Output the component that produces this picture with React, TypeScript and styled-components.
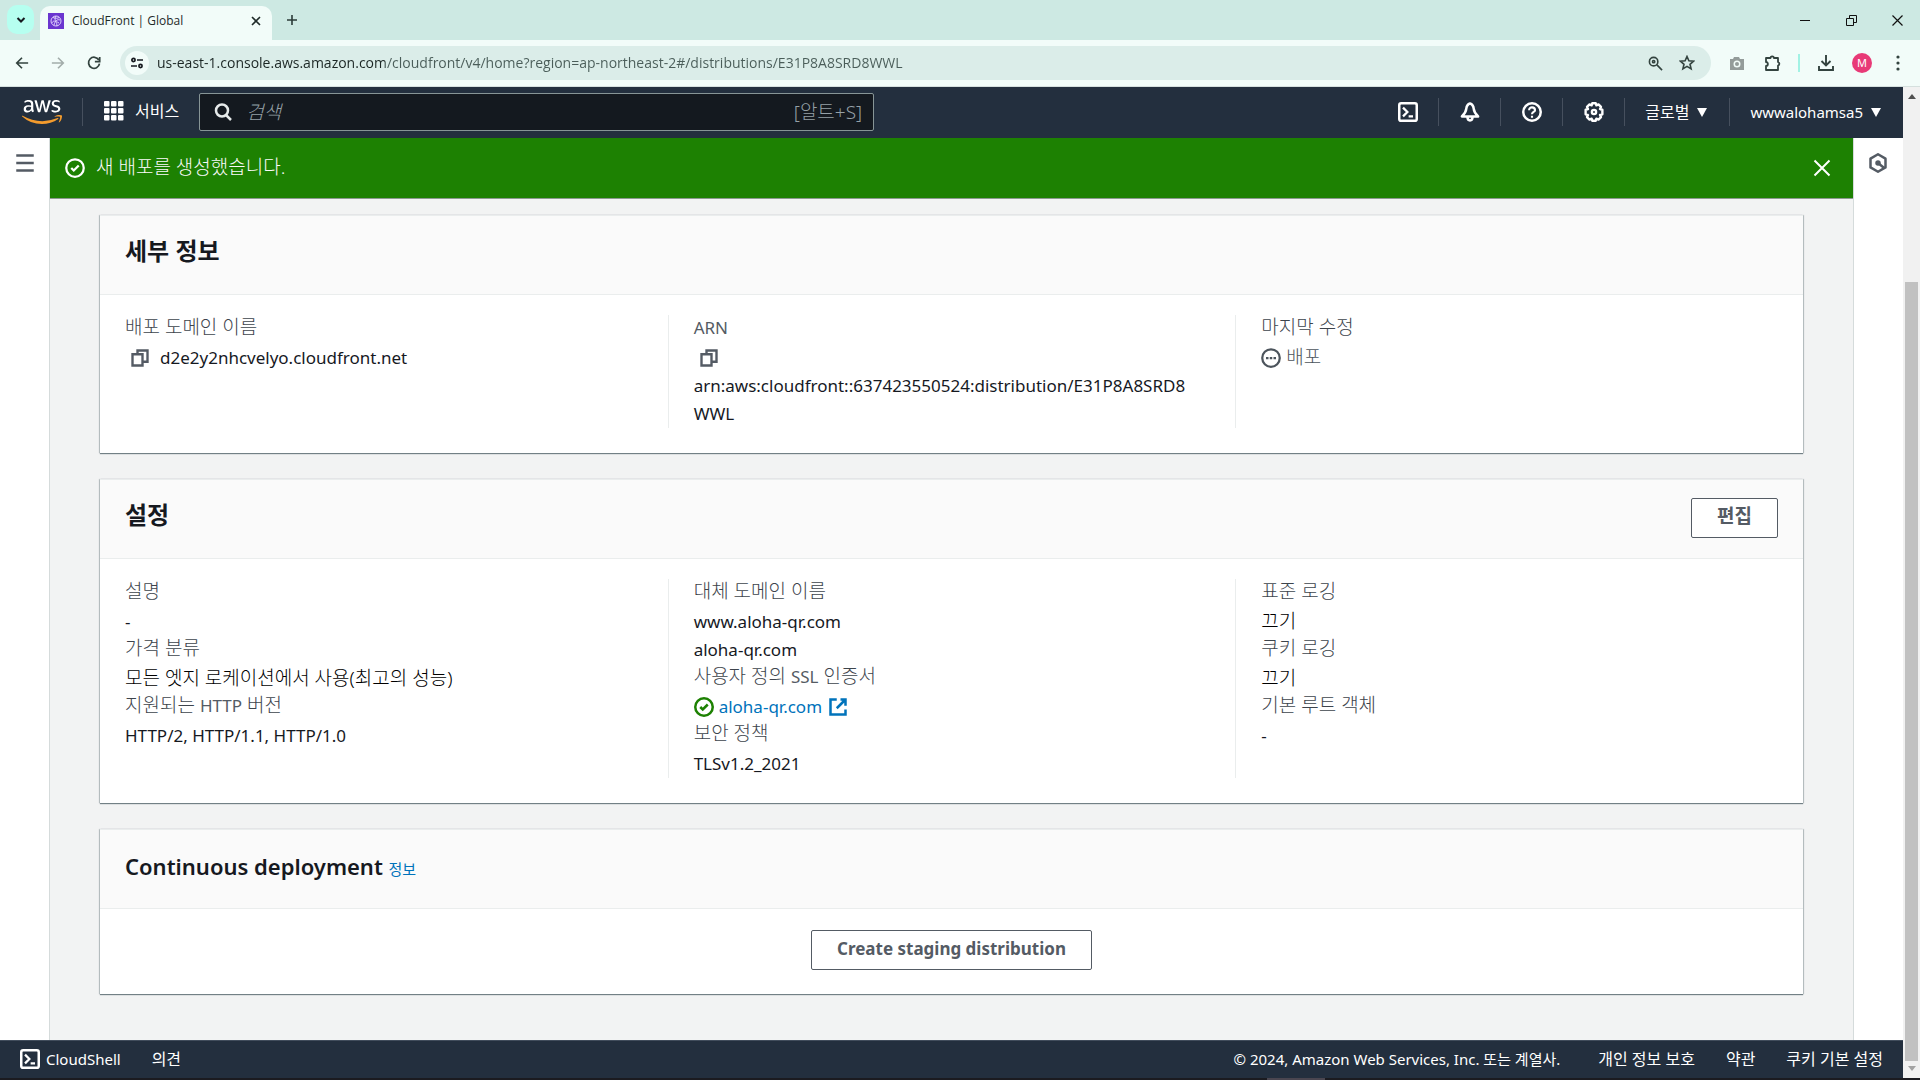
import React from "react";
import styled, { createGlobalStyle, css } from "styled-components";
import { FaAws } from "react-icons/fa";

const c = {
  ink: "#16191f",
  label: "#545b64",
  link: "#0073bb",
  green: "#1d8102",
  nav: "#232f3e",
  page: "#f2f3f3",
  rule: "#eaeded",
  chrome: "#cde9e3",
  toolbar: "#f2fcf9",
};

const sans = `"Noto Sans", "Noto Sans CJK KR", sans-serif`;
const chromeSans = `"Open Sans", "Noto Sans CJK KR", sans-serif`;

const GlobalStyle = createGlobalStyle`
  *, *::before, *::after { box-sizing: border-box; }
  body { margin: 0; font-family: ${sans}; font-size: 17px; line-height: 28px; color: ${c.ink}; overflow: hidden; }
  button, input { font: inherit; color: inherit; margin: 0; }
  button { background: none; border: 0; padding: 0; cursor: pointer; }
  h2, dl, dd, dt, p { margin: 0; }
  a { color: inherit; text-decoration: none; }
  svg { display: block; flex: none; }
`;

const Window = styled.div`
  height: 100vh;
  display: flex;
  flex-direction: column;
  background: #fff;
`;

/* ---------- browser frame ---------- */

const TabStrip = styled.div`
  height: 40px;
  flex: none;
  display: flex;
  align-items: flex-end;
  padding-left: 7px;
  background: ${c.chrome};
`;

const TabSearch = styled.button`
  width: 27px;
  height: 29px;
  margin: 0 6px 6px 0;
  border-radius: 10px;
  background: #b6fff0;
  display: grid;
  place-items: center;
`;

const Tab = styled.div`
  width: 232px;
  height: 34px;
  padding: 0 10px 4px 8px;
  border-radius: 10px 10px 0 0;
  background: ${c.toolbar};
  display: flex;
  align-items: center;
  gap: 8px;
  font-family: ${chromeSans};
  font-size: 12px;
  color: #1f2b29;
`;

const TabTitle = styled.span`
  flex: 1;
`;

const StripButton = styled.button`
  height: 40px;
  width: 40px;
  display: grid;
  place-items: center;
  color: #2b3b38;
`;

const WindowControls = styled.div`
  margin-left: auto;
  display: flex;
`;

const ControlButton = styled.button`
  width: 46px;
  height: 40px;
  display: grid;
  place-items: center;
  color: #111;
`;

const Toolbar = styled.div`
  height: 47px;
  flex: none;
  display: flex;
  align-items: center;
  padding: 0 4px;
  background: ${c.toolbar};
  border-bottom: 1px solid #d5e0de;
`;

const ToolButton = styled.button<{ $dim?: boolean; $w?: number }>`
  width: ${(p) => p.$w ?? 36}px;
  height: 34px;
  display: grid;
  place-items: center;
  color: ${(p) => (p.$dim ? "#a3adab" : "#33433f")};
`;

const AddressBar = styled.div`
  flex: 1;
  height: 34px;
  margin: 0 8px;
  padding: 0 8px 0 5px;
  border-radius: 17px;
  background: #dbede9;
  display: flex;
  align-items: center;
`;

const SiteInfo = styled.button`
  width: 24px;
  height: 24px;
  border-radius: 50%;
  background: ${c.toolbar};
  display: grid;
  place-items: center;
  margin-right: 8px;
`;

const AddressInput = styled.input`
  flex: 1;
  min-width: 0;
  border: 0;
  padding: 0;
  outline: none;
  font-family: ${chromeSans};
  font-size: 14px;
  color: transparent;
  background: linear-gradient(90deg, #1b2624 228px, #4a5d59 228px);
  background-clip: text;
  -webkit-background-clip: text;
`;

const ToolDivider = styled.span`
  width: 2px;
  height: 18px;
  margin: 0 8px 0 7px;
  background: #a2f2e4;
`;

const Avatar = styled.button`
  width: 20px;
  height: 20px;
  margin: 0 8px;
  border-radius: 50%;
  background: #e83a77;
  color: #fff;
  font-size: 11px;
  line-height: 20px;
`;

/* ---------- viewport ---------- */

const Viewport = styled.div`
  flex: 1;
  min-height: 0;
  display: flex;
`;

const Page = styled.div`
  flex: 1;
  min-width: 0;
  display: flex;
  flex-direction: column;
`;

const ScrollTrack = styled.div`
  width: 17px;
  display: flex;
  flex-direction: column;
  align-items: center;
  padding: 6px 0;
  background: #f1f1f1;
`;

const ScrollThumb = styled.div`
  width: 13px;
  flex: 1;
  margin: 183px 0 5px;
  background: #c1c1c1;
`;

const NavBar = styled.header`
  height: 51px;
  flex: none;
  display: flex;
  align-items: center;
  padding-bottom: 1px;
  background: ${c.nav};
  color: #fff;
  font-size: 15px;
`;

const NavDivider = styled.span`
  width: 1px;
  height: 28px;
  background: #46505e;
`;

const LogoLink = styled.a`
  padding: 0 20px 0 22px;
`;

const Services = styled.button`
  display: flex;
  align-items: center;
  gap: 11px;
  padding: 0 20px 2px 21px;
  font-size: 16px;
`;

const SearchBox = styled.label`
  width: 675px;
  height: 38px;
  padding: 0 11px 0 13px;
  display: flex;
  align-items: center;
  gap: 13px;
  border: 1px solid #879596;
  border-radius: 2px;
  background: #14191f;
  color: #95a0a6;
  font-size: 19px;
  font-weight: 300;
`;

const SearchInput = styled.input`
  flex: 1;
  min-width: 0;
  border: 0;
  padding: 0;
  outline: none;
  background: none;
  &::placeholder {
    color: #95a0a6;
    opacity: 1;
    font-style: italic;
  }
`;

const NavRight = styled.nav`
  margin-left: auto;
  display: flex;
  align-items: center;
`;

const NavIcon = styled.button`
  width: 61px;
  height: 40px;
  display: grid;
  place-items: center;
`;

const NavMenu = styled.button<{ $ko?: boolean }>`
  display: flex;
  align-items: center;
  gap: 8px;
  padding: 0 22px 0 20px;
  font-size: ${(p) => (p.$ko ? 16 : 15)}px;
`;

const Body = styled.div`
  flex: 1;
  min-height: 0;
  display: flex;
`;

const Rail = styled.aside<{ $side: "left" | "right" }>`
  width: 50px;
  flex: none;
  display: flex;
  justify-content: center;
  align-items: flex-start;
  padding-top: 15px;
  color: ${c.label};
  background: #fff;
  box-shadow: inset ${(p) => (p.$side === "left" ? "-1px" : "1px")} 0 #d5dbdb;
`;

const Main = styled.main`
  flex: 1;
  min-width: 0;
  background: ${c.page};
`;

const Flash = styled.div`
  height: 61px;
  display: flex;
  align-items: center;
  gap: 11px;
  padding: 0 21px 0 15px;
  background: ${c.green};
  color: #fff;
  border-bottom: 1px solid #8c9a90;
`;

const FlashText = styled.p`
  flex: 1;
  padding-bottom: 2px;
  color: #fafafa;
  font-size: 19px;
  font-weight: 300;
`;

const Cards = styled.div`
  padding: 16px 50px 0 50px;
  display: grid;
  gap: 26px;
`;

const Card = styled.section`
  background: #fff;
  border-top: 1px solid ${c.rule};
  box-shadow: 0 1px 1px 0 rgba(0, 28, 36, 0.5), 1px 0 1px 0 rgba(0, 28, 36, 0.18), -1px 0 1px 0 rgba(0, 28, 36, 0.18);
`;

const CardHeader = styled.div`
  height: 79px;
  padding: 18px 25px;
  display: flex;
  justify-content: space-between;
  background: #fafafa;
  border-bottom: 1px solid ${c.rule};
`;

const Title = styled.h2<{ $ko?: boolean }>`
  font-size: ${(p) => (p.$ko ? 24 : 22)}px;
  line-height: ${(p) => (p.$ko ? 34 : 36)}px;
  font-weight: 600;
`;

const InfoLink = styled.a`
  font-size: 15px;
  font-weight: 400;
  color: ${c.link};
`;

const Button = styled.button<{ $ko?: boolean }>`
  height: 40px;
  padding: 0 25px ${(p) => (p.$ko ? 4 : 2)}px;
  border: 1px solid ${c.label};
  border-radius: 2px;
  background: #fff;
  color: ${c.label};
  font-size: ${(p) => (p.$ko ? 19 : 17)}px;
  font-weight: ${(p) => (p.$ko ? 600 : 700)};
`;

const Columns = styled.div`
  padding: 20px 25px 25px;
  display: grid;
  grid-template-columns: repeat(3, minmax(0, 1fr));
  column-gap: 50px;
`;

const Column = styled.dl`
  & + & {
    margin-left: -25px;
    padding-left: 25px;
    border-left: 1px solid ${c.rule};
  }
`;

const Label = styled.dt<{ $latin?: boolean }>`
  height: 29px;
  line-height: ${(p) => (p.$latin ? 26 : 24)}px;
  color: ${(p) => (p.$latin ? c.label : "#3d444c")};
  font-size: ${(p) => (p.$latin ? 17 : 19)}px;
  font-weight: ${(p) => (p.$latin ? 400 : 300)};
`;

const LatinRun = styled.span`
  font-size: 17px;
  font-weight: 400;
  color: ${c.label};
`;

const Value = styled.dd<{ $muted?: boolean; $ko?: boolean }>`
  display: flex;
  align-items: center;
  gap: 5px;
  height: 28px;
  color: ${(p) => (p.$muted ? "#4c545c" : c.ink)};
  ${(p) => p.$ko && css`font-size: 19px; font-weight: 300; line-height: 24px;`}
  ${(p) => p.$ko && !p.$muted && css`color: #000;`}
`;

const KoText = styled.span`
  padding-bottom: 3px;
`;

const Arn = styled.dd`
  word-break: break-all;
  padding-right: 12px;
`;

const CopyButton = styled.button`
  padding: 0 5px;
  color: ${c.label};
`;

const Center = styled.div`
  padding: 21px 25px 24px;
  display: flex;
  justify-content: center;
`;

const ExternalLink = styled.a`
  display: flex;
  align-items: center;
  gap: 6px;
  color: ${c.link};
`;

const Footer = styled.footer`
  height: 38px;
  flex: none;
  display: flex;
  align-items: center;
  gap: 31px;
  padding: 0 20px 1px;
  background: ${c.nav};
  border-top: 1px solid #414d5c;
  color: #fff;
  font-size: 16px;
`;

const FooterButton = styled.button<{ $latin?: boolean }>`
  display: flex;
  align-items: center;
  gap: 6px;
  ${(p) => p.$latin && css`font-size: 15px;`}
`;

const Copyright = styled.span`
  margin-left: auto;
  padding-right: 7px;
  font-size: 15px;
`;

const TaskbarEdge = styled.div`
  height: 2px;
  flex: none;
  background: linear-gradient(90deg, #1b1b20 66%, #4a4650 66%, #4a4650 69%, #1b1b20 69%);
`;

/* ---------- icons ---------- */

const Stroke = ({ size = 20, w = 2, box = 16, children }: { size?: number; w?: number; box?: number; children: React.ReactNode }) => (
  <svg width={size} height={size} viewBox={`0 0 ${box} ${box}`} fill="none" stroke="currentColor" strokeWidth={w} aria-hidden="true">
    {children}
  </svg>
);

const CopyIcon = () => (
  <Stroke size={20} w={1.9}><path d="M2 5h8v9H2z" /><path d="M6 5V2h8v9h-4" /></Stroke>
);
const CheckCircle = () => (
  <Stroke size={20} w={1.8}><circle cx="8" cy="8" r="7" /><path d="M5 8l2 2 4-4" /></Stroke>
);
const PendingIcon = () => (
  <Stroke size={20} w={1.8}><circle cx="8" cy="8" r="7" /><path d="M4 8h2M7 8h2M10 8h2" /></Stroke>
);
const ExternalIcon = () => (
  <Stroke size={20}><path d="M7 2H2v12h12V10" /><path d="M10 2h4v5M14 2L7 9" /></Stroke>
);
const CloseIcon = () => (
  <Stroke size={20} w={1.6}><path d="M2 2l12 12M14 2L2 14" /></Stroke>
);
const MenuIcon = () => (
  <Stroke size={20}><path d="M1 2h14M1 8h14M1 14h14" /></Stroke>
);
const ShellIcon = () => (
  <Stroke size={20}><rect x="1" y="1" width="14" height="14" rx="1.5" /><path d="M4 4.500l3.500 3.500L4 11.500M8.500 11.500H12" strokeWidth="1.800" /></Stroke>
);
const BellIcon = () => (
  <Stroke size={20} w={2}>
    <path d="M8 1.200C6 1.800 5.200 3.600 5 5.500 4.800 8 3.600 9.500 1.500 11.500h13C12.400 9.500 11.200 8 11 5.500 10.800 3.600 10 1.800 8 1.200z" strokeLinejoin="round" />
    <path d="M6 12c0 1.800.7 2.700 2 2.700s2-.9 2-2.700" />
  </Stroke>
);
const HelpIcon = () => (
  <Stroke size={20}><circle cx="8" cy="8" r="7" /><path d="M5.700 6.500c0-3 4.700-2.800 4.700 0C10.400 8 8 8 8 9.700M8 11v1.500" strokeWidth="1.700" /></Stroke>
);
const GearIcon = () => (
  <Stroke size={20} w={1.9}>
    <path d="M6.600 1h2.800l.5 1.700 1.700-.8 2 2-.8 1.700 1.900.6v3.600l-1.900.6.8 1.700-2 2-1.700-.8-.5 1.700H6.600l-.5-1.700-1.700.8-2-2 .8-1.700-1.900-.6V6.200l1.900-.6-.8-1.700 2-2 1.700.8z" strokeLinejoin="round" />
    <circle cx="8" cy="8" r="1.700" />
  </Stroke>
);
const SearchIcon = () => (
  <svg width="20" height="20" viewBox="0 0 20 20" fill="none" stroke="#e6eaea" strokeWidth="2.500" aria-hidden="true">
    <circle cx="9" cy="8.500" r="6" /><path d="M13 13l5 5" />
  </svg>
);
const GridIcon = () => (
  <svg width="20" height="20" viewBox="0 0 20 20" fill="#fff" aria-hidden="true">
    {[0, 7, 14].map((y) => [0, 7, 14].map((x) => <rect key={`${x}-${y}`} x={x} y={y} width="5.500" height="5.500" rx="1" />))}
  </svg>
);
const Caret = () => (
  <svg width="10" height="9" viewBox="0 0 10 9" fill="#fff" aria-hidden="true"><path d="M0 0h10L5 9z" /></svg>
);
const HexIcon = () => (
  <Stroke size={20}><path d="M8 1l6 3.500v7L8 15l-6-3.500v-7z" strokeLinejoin="round" /><circle cx="8" cy="8" r="2.200" fill="currentColor" stroke="none" /><path d="M8 8l5 4" /></Stroke>
);
const AwsLogo = () => (
  <>
    <svg width="0" height="0" aria-hidden="true">
      <linearGradient id="awsFill" gradientUnits="userSpaceOnUse" x1="0" y1="0" x2="0" y2="512">
        <stop offset="0.580" stopColor="#fff" /><stop offset="0.580" stopColor="#f39b2d" />
      </linearGradient>
    </svg>
    <FaAws style={{ width: 40, height: 32 }} fill="url(#awsFill)" />
  </>
);
const Favicon = () => (
  <svg width="16" height="16" viewBox="0 0 16 16" aria-hidden="true">
    <rect width="16" height="16" fill="#6a35cf" />
    <g fill="none" stroke="#e8dcff" strokeWidth="0.900">
      <circle cx="8" cy="8" r="5" /><path d="M5 4.500c2 1 5 1 6 0M4 10c1-3 5-3 5 3M8 3c-2 3-1 5 3 7M12 7c-3-1-5 1-6 5" />
    </g>
  </svg>
);

/* ---------- sections ---------- */

const BrowserFrame = () => (
  <>
    <TabStrip>
      <TabSearch aria-label="탭 검색"><Stroke size={10} box={10}><path d="M1.500 3L5 6.500 8.500 3" /></Stroke></TabSearch>
      <Tab>
        <Favicon />
        <TabTitle>CloudFront | Global</TabTitle>
        <button aria-label="탭 닫기"><Stroke size={12} box={12} w={1.6}><path d="M2 2l8 8M10 2l-8 8" /></Stroke></button>
      </Tab>
      <StripButton aria-label="새 탭"><Stroke size={12} box={12} w={1.6}><path d="M6 1v10M1 6h10" /></Stroke></StripButton>
      <WindowControls>
        <ControlButton aria-label="최소화"><Stroke size={10} box={10} w={1}><path d="M0 5.500h10" /></Stroke></ControlButton>
        <ControlButton aria-label="이전 크기로"><Stroke size={11} box={11} w={1}><path d="M.5 3.500h7v7h-7zM3.500 3.500v-3h7v7h-3" /></Stroke></ControlButton>
        <ControlButton aria-label="닫기"><Stroke size={11} box={11} w={1.2}><path d="M.5.5l10 10M10.500.5l-10 10" /></Stroke></ControlButton>
      </WindowControls>
    </TabStrip>
    <Toolbar>
      <ToolButton aria-label="뒤로"><Stroke size={14} w={1.9}><path d="M15 8H2M8 2L2 8l6 6" /></Stroke></ToolButton>
      <ToolButton $dim aria-label="앞으로"><Stroke size={14} w={1.9}><path d="M1 8h13M8 2l6 6-6 6" /></Stroke></ToolButton>
      <ToolButton aria-label="새로고침"><Stroke size={14} w={2}><path d="M13.500 4.500A6.300 6.300 0 1 0 14.300 8.800M14.500 1v5.500H9" /></Stroke></ToolButton>
      <AddressBar>
        <SiteInfo aria-label="사이트 정보"><Stroke size={14} box={14} w={1.7}><circle cx="3.500" cy="4" r="1.600" /><path d="M7 4h6M1 10h6" /><circle cx="10.500" cy="10" r="1.600" /></Stroke></SiteInfo>
        <AddressInput aria-label="주소창" defaultValue="us-east-1.console.aws.amazon.com/cloudfront/v4/home?region=ap-northeast-2#/distributions/E31P8A8SRD8WWL" />
        <ToolButton $w={32} aria-label="확대"><Stroke size={15} w={1.7}><circle cx="6" cy="6" r="4.500" /><path d="M9.500 9.500L15 15" /><circle cx="6" cy="6" r="1.200" /></Stroke></ToolButton>
        <ToolButton $w={32} aria-label="북마크"><Stroke size={16} w={1.6}><path d="M8 1.500l1.900 4.300 4.700.4-3.600 3.100 1.100 4.600L8 11.400l-4.100 2.500L5 9.300 1.400 6.200l4.700-.4z" /></Stroke></ToolButton>
      </AddressBar>
      <ToolButton aria-label="캡처">
        <svg width="16" height="16" viewBox="0 0 16 16" fill="#949c9a" aria-hidden="true"><path fillRule="evenodd" d="M1 4h3l1-2h5l1 2h4v11H1zM8 5.500a3.500 3.500 0 1 0 0 7 3.500 3.500 0 0 0 0-7z" /><circle cx="8" cy="9" r="2" /></svg>
      </ToolButton>
      <ToolButton aria-label="확장 프로그램"><Stroke size={18} box={18} w={1.8}><path d="M2 4h4.500a1.700 1.700 0 0 1 3.400 0H14v4a1.800 1.800 0 0 1 0 3.500V16H2v-4c2.500 0 2.500-4 0-4z" strokeLinejoin="round" /></Stroke></ToolButton>
      <ToolDivider />
      <ToolButton aria-label="다운로드"><Stroke size={18} box={18} w={1.9}><path d="M9 1v10M4.500 7L9 11.500 13.500 7M2 12v4h14v-4" /></Stroke></ToolButton>
      <Avatar>M</Avatar>
      <ToolButton aria-label="메뉴">
        <svg width="4" height="16" viewBox="0 0 4 16" fill="currentColor" aria-hidden="true"><circle cx="2" cy="2" r="1.600" /><circle cx="2" cy="8" r="1.600" /><circle cx="2" cy="14" r="1.600" /></svg>
      </ToolButton>
    </Toolbar>
  </>
);

const navIcons: [string, React.ReactNode][] = [
  ["CloudShell", <ShellIcon />],
  ["알림", <BellIcon />],
  ["도움말", <HelpIcon />],
  ["설정", <GearIcon />],
];

const ConsoleNav = () => (
  <NavBar>
    <LogoLink href="#" aria-label="AWS"><AwsLogo /></LogoLink>
    <NavDivider />
    <Services><GridIcon />서비스</Services>
    <SearchBox>
      <SearchIcon />
      <SearchInput aria-label="검색" placeholder="검색" />
      [알트+S]
    </SearchBox>
    <NavRight>
      {navIcons.map(([name, icon]) => (
        <React.Fragment key={name}>
          <NavIcon aria-label={name}>{icon}</NavIcon>
          <NavDivider />
        </React.Fragment>
      ))}
      <NavMenu $ko>글로벌<Caret /></NavMenu>
      <NavDivider />
      <NavMenu>wwwalohamsa5<Caret /></NavMenu>
    </NavRight>
  </NavBar>
);

const Details = () => (
  <Card>
    <CardHeader><Title $ko>세부 정보</Title></CardHeader>
    <Columns>
      <Column>
        <Label>배포 도메인 이름</Label>
        <Value><CopyButton aria-label="복사"><CopyIcon /></CopyButton>d2e2y2nhcvelyo.cloudfront.net</Value>
      </Column>
      <Column>
        <Label $latin>ARN</Label>
        <Value><CopyButton aria-label="복사"><CopyIcon /></CopyButton></Value>
        <Arn>arn:aws:cloudfront::637423550524:distribution/E31P8A8SRD8WWL</Arn>
      </Column>
      <Column>
        <Label>마지막 수정</Label>
        <Value $muted $ko><PendingIcon /><KoText>배포</KoText></Value>
      </Column>
    </Columns>
  </Card>
);

const Settings = () => (
  <Card>
    <CardHeader><Title $ko>설정</Title><Button $ko>편집</Button></CardHeader>
    <Columns>
      <Column>
        <Label>설명</Label>
        <Value>-</Value>
        <Label>가격 분류</Label>
        <Value $ko><KoText>모든 엣지 로케이션에서 사용(최고의 성능)</KoText></Value>
        <Label>지원되는 <LatinRun>HTTP</LatinRun> 버전</Label>
        <Value>HTTP/2, HTTP/1.1, HTTP/1.0</Value>
      </Column>
      <Column>
        <Label>대체 도메인 이름</Label>
        <Value>www.aloha-qr.com</Value>
        <Value>aloha-qr.com</Value>
        <Label>사용자 정의 <LatinRun>SSL</LatinRun> 인증서</Label>
        <Value>
          <svg width="20" height="20" viewBox="0 0 16 16" fill="none" stroke={c.green} strokeWidth="2" aria-hidden="true"><circle cx="8" cy="8" r="7" /><path d="M5 8l2 2 4-4" /></svg>
          <ExternalLink href="#">aloha-qr.com<ExternalIcon /></ExternalLink>
        </Value>
        <Label>보안 정책</Label>
        <Value>TLSv1.2_2021</Value>
      </Column>
      <Column>
        <Label>표준 로깅</Label>
        <Value $ko><KoText>끄기</KoText></Value>
        <Label>쿠키 로깅</Label>
        <Value $ko><KoText>끄기</KoText></Value>
        <Label>기본 루트 객체</Label>
        <Value>-</Value>
      </Column>
    </Columns>
  </Card>
);

const Deployment = () => (
  <Card>
    <CardHeader><Title>Continuous deployment <InfoLink href="#">정보</InfoLink></Title></CardHeader>
    <Center><Button>Create staging distribution</Button></Center>
  </Card>
);

export default function App() {
  return (
    <Window>
      <GlobalStyle />
      <BrowserFrame />
      <Viewport>
        <Page>
          <ConsoleNav />
          <Body>
            <Rail $side="left"><button aria-label="탐색 열기"><MenuIcon /></button></Rail>
            <Main>
              <Flash role="status">
                <CheckCircle />
                <FlashText>새 배포를 생성했습니다.</FlashText>
                <button aria-label="알림 닫기"><CloseIcon /></button>
              </Flash>
              <Cards>
                <Details />
                <Settings />
                <Deployment />
              </Cards>
            </Main>
            <Rail $side="right"><button aria-label="도구 열기"><HexIcon /></button></Rail>
          </Body>
          <Footer>
            <FooterButton $latin><ShellIcon />CloudShell</FooterButton>
            <FooterButton>의견</FooterButton>
            <Copyright>© 2024, Amazon Web Services, Inc. 또는 계열사.</Copyright>
            <a href="#">개인 정보 보호</a>
            <a href="#">약관</a>
            <a href="#">쿠키 기본 설정</a>
          </Footer>
        </Page>
        <ScrollTrack aria-hidden="true">
          <svg width="8" height="6" viewBox="0 0 8 6" fill="#505050"><path d="M0 6h8L4 1z" /></svg>
          <ScrollThumb />
          <svg width="8" height="6" viewBox="0 0 8 6" fill="#a3a3a3"><path d="M0 0h8L4 5z" /></svg>
        </ScrollTrack>
      </Viewport>
      <TaskbarEdge />
    </Window>
  );
}
